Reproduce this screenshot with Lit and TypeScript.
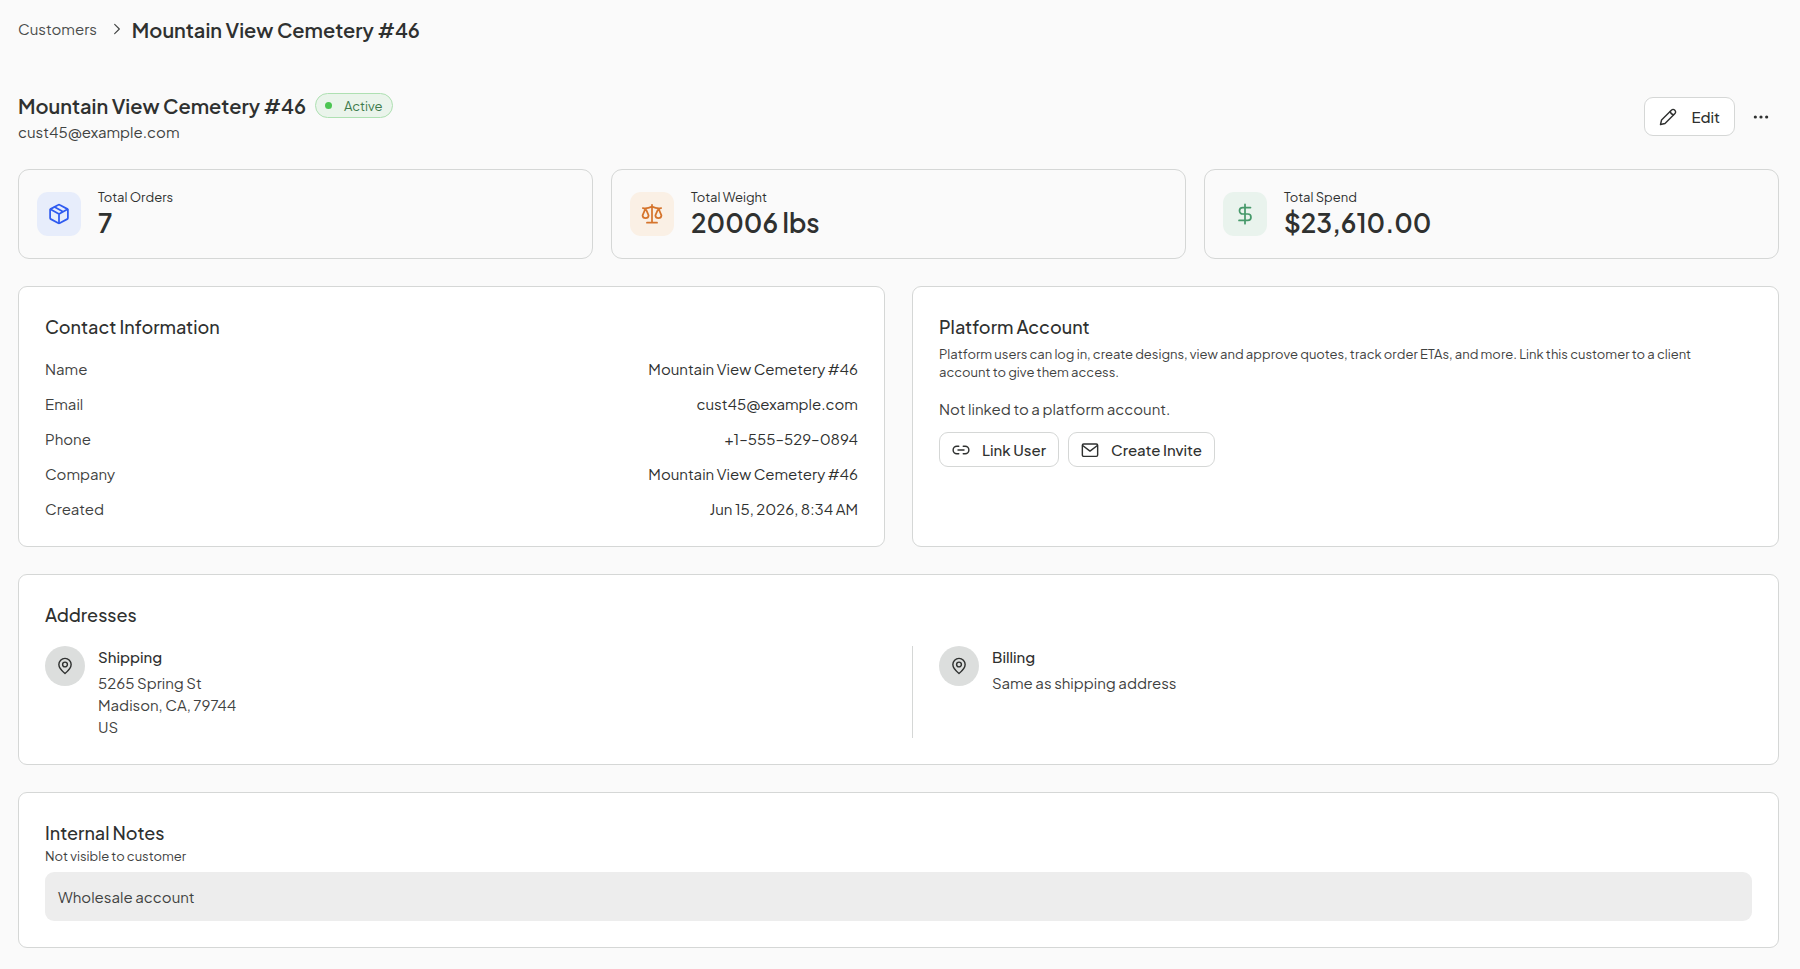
import { LitElement, html, css, svg } from "lit";
import { customElement } from "lit/decorators.js";

const icon = (body: unknown) => html`
  <svg class="icon" viewBox="0 0 24 24" fill="none" stroke="currentColor" stroke-width="1.9"
    stroke-linecap="round" stroke-linejoin="round" aria-hidden="true">${body}</svg>`;

const chevron = svg`<path d="M8 4l8 8-8 8" />`;
const pencil = svg`<path d="M2 22l1.400-6L16.800 2.700a2.700 2.700 0 0 1 3.900 0l.6.600a2.700 2.700 0 0 1 0 3.900L8 20.600z" /><path d="M15 4.600c.4 2.600 1.800 4 4.400 4.400" />`;
const dots = svg`<g fill="currentColor" stroke="none"><circle cx="3.500" cy="12" r="2.400" /><circle cx="12" cy="12" r="2.400" /><circle cx="20.500" cy="12" r="2.400" /></g>`;
const box = svg`<path d="M11 2.100a2 2 0 0 1 2 0l7.900 4.300a1.500 1.500 0 0 1 .8 1.300v8.600a1.500 1.500 0 0 1-.8 1.300L13 21.900a2 2 0 0 1-2 0l-7.900-4.300a1.500 1.500 0 0 1-.8-1.300V7.700a1.500 1.500 0 0 1 .8-1.300z" /><path d="M2.700 6.900 12 12l9.300-5.100M12 12v10M7.200 4.400l9.300 5.100" />`;
const scale = svg`<path d="M12 2v19.500M6.500 21.500h11M2 5.500c4 .8 7-.2 10-1.500 3 1.300 6 2.300 10 1.500M5 5.800 1.700 13.500c.2 4 6.400 4 6.600 0zM19 5.800l-3.300 7.700c.2 4 6.400 4 6.600 0z" />`;
const dollar = svg`<path d="M12 1.500v21M18 5H9.500a3.500 3.500 0 0 0 0 7h5.500a3.500 3.500 0 0 1 0 7H5.500" />`;
const link = svg`<path d="M9 17H6.500a5 5 0 0 1 0-10H9M15 7h2.500a5 5 0 0 1 0 10H15M8 12h8" />`;
const mail = svg`<rect x="1.800" y="4" width="20.400" height="16.500" rx="1.800" /><path d="M2.200 6 12 13.500 21.800 6" />`;
const pin = svg`<path d="M12 22C7.500 18.300 3.800 14.500 3.800 10a8.200 8.200 0 0 1 16.400 0c0 4.500-3.700 8.300-8.200 12z" /><circle cx="12" cy="10" r="3.200" />`;

const stats = [
  { label: "Total Orders", value: "7", tone: "blue", glyph: box },
  { label: "Total Weight", value: "20006 lbs", tone: "orange", glyph: scale },
  { label: "Total Spend", value: "$23,610.00", tone: "green", glyph: dollar },
];

const contact = [
  ["Name", "Mountain View Cemetery #46"],
  ["Email", "cust45@example.com"],
  ["Phone", "+1\u2013555\u2013529\u20130894"],
  ["Company", "Mountain View Cemetery #46"],
  ["Created", "Jun 15, 2026, 8:34 AM"],
];

const addresses = [
  { kind: "Shipping", lines: ["5265 Spring St", "Madison, CA, 79744", "US"] },
  { kind: "Billing", lines: ["Same as shipping address"] },
];

@customElement("app-root")
export class AppRoot extends LitElement {
  static styles = css`
    :host {
      display: block;
      box-sizing: border-box;
      min-height: 100vh;
      padding: 12px 21px 20px 18px;
      background: #fafafa;
      color: #3f4241;
      font: 400 15px/22px "Plus Jakarta Sans", Inter, "Open Sans", sans-serif;
    }
    *, *::before { box-sizing: border-box; }
    h1, h2, h3, p, dl, dd, dt, ol { margin: 0; padding: 0; font-weight: 400; }
    .icon { display: block; width: 18px; height: 18px; flex: none; }
    .crumbs ol { display: flex; align-items: center; list-style: none; min-height: 34px; gap: 8px; }
    .crumbs li { display: flex; align-items: center; gap: 13px; }
    .crumbs a { color: #4b4d4c; text-decoration: none; }
    .crumbs .icon { width: 14px; height: 14px; }
    .crumbs .title, h1.title { font-size: 20px; line-height: 31px; font-weight: 600; color: #2f3130; }
    header { display: flex; align-items: center; justify-content: space-between; margin: 44px 0 26px; }
    .name { display: flex; align-items: center; gap: 9px; }
    .badge {
      display: flex; align-items: center; gap: 12px; height: 25px; padding: 0 9px;
      border: 1px solid #aee0b2; border-radius: 13px; background: #eaf4eb;
      color: #3d7a4b; font-size: 13px; line-height: 18px;
    }
    .badge::before { content: ""; width: 7px; height: 7px; border-radius: 50%; background: #4cc552; }
    .actions { display: flex; align-items: center; gap: 8px; }
    button {
      display: flex; align-items: center; gap: 12px; height: 35px; margin: 0; padding: 0 12px;
      border: 1px solid #d5d7d6; border-radius: 9px; background: #fff;
      color: #2f3130; font: inherit; font-weight: 500; cursor: pointer;
    }
    button.edit { height: 39px; padding: 0 14px; gap: 14px; }
    button.more { padding: 0 9px; border-color: transparent; background: none; }
    button.more .icon { width: 16px; height: 16px; }
    .stats { display: grid; grid-template-columns: repeat(3, 1fr); gap: 18px; }
    .stat {
      display: flex; align-items: center; gap: 17px; padding: 18px;
      border: 1px solid #d5d7d6; border-radius: 11px;
    }
    .tile { display: grid; place-items: center; width: 44px; height: 44px; border-radius: 11px; }
    .tile .icon { width: 22px; height: 22px; }
    .blue { background: #e7edfb; color: #2f5bf0; }
    .orange { background: #faf0e5; color: #d5742c; }
    .green { background: #e9f3ed; color: #46996a; }
    .label { font-size: 13px; line-height: 18px; color: #2f3130; }
    .value { font-size: 26px; line-height: 34px; font-weight: 600; color: #2f3130; }
    .panels { display: grid; grid-template-columns: repeat(2, 1fr); gap: 27px; margin-top: 27px; }
    .card { padding: 26px; border: 1px solid #d5d7d6; border-radius: 9px; background: #fff; }
    .wide { grid-column: 1 / -1; }
    h2 { font-size: 18px; line-height: 28px; font-weight: 500; color: #2f3130; }
    .rows { display: grid; gap: 13px; margin-top: 17px; }
    .row { display: flex; justify-content: space-between; }
    .row dd { color: #2f3130; }
    .small { font-size: 13px; line-height: 18px; }
    .intro { margin-top: 4px; padding-right: 26px; }
    .status { margin: 17px 0 12px; }
    .buttons { display: flex; gap: 9px; }
    .places { display: grid; grid-template-columns: repeat(2, 1fr); column-gap: 27px; margin-top: 17px; }
    .place { display: flex; gap: 13px; }
    .place + .place { padding-left: 26px; border-left: 1px solid #d5d7d6; }
    .disc {
      display: grid; place-items: center; flex: none; width: 40px; height: 40px;
      border-radius: 50%; background: #dcdedd; color: #2f3130;
    }
    h3 { margin-bottom: 4px; font-size: 15px; line-height: 22px; font-weight: 500; color: #2f3130; }
    .note { margin-top: 7px; padding: 14px 13px 13px; border-radius: 9px; background: #ededed; }
  `;

  render() {
    return html`
      <nav class="crumbs" aria-label="Breadcrumb">
        <ol>
          <li><a href="#customers">Customers</a>${icon(chevron)}</li>
          <li class="title" aria-current="page">Mountain View Cemetery #46</li>
        </ol>
      </nav>
      <header>
        <div class="who">
          <div class="name"><h1 class="title">Mountain View Cemetery #46</h1><span class="badge">Active</span></div>
          <p>cust45@example.com</p>
        </div>
        <div class="actions">
          <button class="edit" type="button">${icon(pencil)}Edit</button>
          <button class="more" type="button" aria-label="More actions">${icon(dots)}</button>
        </div>
      </header>
      <section class="stats">
        ${stats.map((s) => html`
          <div class="stat">
            <span class="tile ${s.tone}">${icon(s.glyph)}</span>
            <div><p class="label">${s.label}</p><p class="value">${s.value}</p></div>
          </div>`)}
      </section>
      <main class="panels">
        <section class="card">
          <h2>Contact Information</h2>
          <dl class="rows">
            ${contact.map(([k, v]) => html`<div class="row"><dt>${k}</dt><dd>${v}</dd></div>`)}
          </dl>
        </section>
        <section class="card">
          <h2>Platform Account</h2>
          <p class="small intro">Platform users can log in, create designs, view and approve quotes, track order ETAs, and more. Link this customer to a client account to give them access.</p>
          <p class="status">Not linked to a platform account.</p>
          <div class="buttons">
            <button type="button">${icon(link)}Link User</button>
            <button type="button">${icon(mail)}Create Invite</button>
          </div>
        </section>
        <section class="card wide">
          <h2>Addresses</h2>
          <div class="places">
            ${addresses.map((a) => html`
              <div class="place">
                <span class="disc">${icon(pin)}</span>
                <div><h3>${a.kind}</h3>${a.lines.map((l) => html`<p>${l}</p>`)}</div>
              </div>`)}
          </div>
        </section>
        <section class="card wide">
          <h2>Internal Notes</h2>
          <p class="small">Not visible to customer</p>
          <p class="note">Wholesale account</p>
        </section>
      </main>
    `;
  }
}
